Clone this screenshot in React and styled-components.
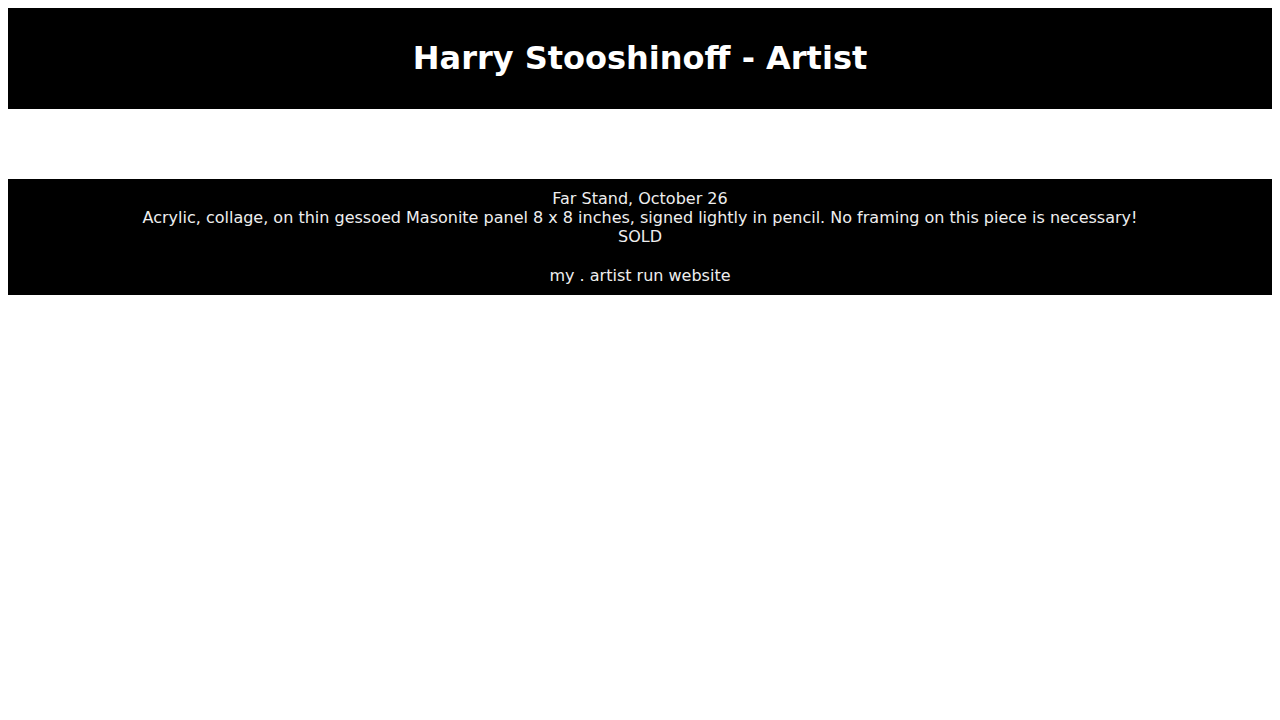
import React from 'react';
import styled, { createGlobalStyle } from 'styled-components';

const GlobalStyle = createGlobalStyle`
  body {
    margin: 8px;
    background: #fff;
    font-family: "DejaVu Sans", Verdana, sans-serif;
  }
`;

const Header = styled.header`
  background-color: #000;
  height: 101px;
  display: flex;
  align-items: center;
  justify-content: center;
`;

const Title = styled.h1`
  margin: 0 0 2px;
  font-size: 32px;
  font-weight: bold;
  color: #fff;
`;

const Spacer = styled.div`
  height: 70px;
`;

const InfoBlock = styled.section`
  background-color: #000;
  color: #eee;
  text-align: center;
  font-size: 16px;
  line-height: 19px;
  padding: 10px 0 10px;
`;

const Line = styled.div`
  min-height: ${(p) => (p.$blank ? '20px' : '19px')};
`;

export const App = () => {
  return (
    <>
      <GlobalStyle />
      <Header>
        <Title>Harry Stooshinoff - Artist</Title>
      </Header>
      <Spacer />
      <InfoBlock>
        <Line>Far Stand, October 26</Line>
        <Line>
          Acrylic, collage, on thin gessoed Masonite panel 8 x 8 inches, signed lightly in pencil. No framing on this piece is necessary!
        </Line>
        <Line>SOLD</Line>
        <Line $blank />
        <Line>my . artist run website</Line>
      </InfoBlock>
    </>
  );
};

export default App;
